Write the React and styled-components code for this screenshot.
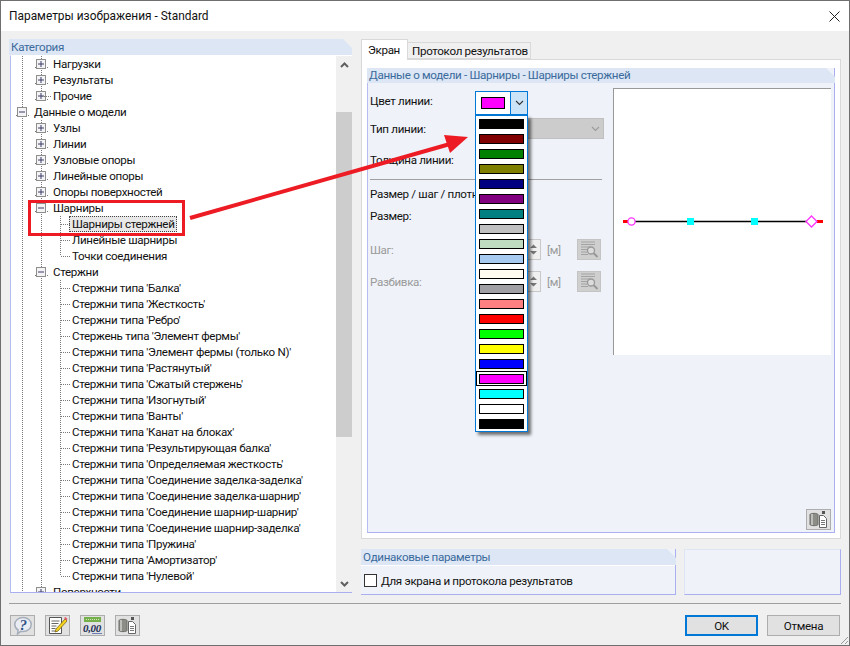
import React from "react";
import styled, { createGlobalStyle, css } from "styled-components";

const
	GlobalStyle = createGlobalStyle`
		html, body {
			margin: 0;
			width: 850px;
			height: 646px;
			overflow: hidden;
			background: #f0f0f0;
		}
		* { box-sizing: border-box; }
	`,
	Dialog = styled.div`
		position: relative;
		width: 850px;
		height: 646px;
		display: flex;
		flex-direction: column;
		background: #f0f0f0;
		border: 1px solid #6f6f6f;
		color: #111;
		font-family: Roboto, "Liberation Sans", sans-serif;
		font-size: 11.6px;
		letter-spacing: -.32px;
		line-height: 16px;
	`,
	TitleBar = styled.div`
		height: 30px;
		flex: none;
		display: flex;
		align-items: center;
		justify-content: space-between;
		padding: 0 9px 0 8px;
		background: #fff;
		font-size: 11.9px;
		letter-spacing: 0;
	`,
	Main = styled.div`
		display: flex;
		gap: 9px;
		height: 556px;
		margin: 8px 8px 0;
	`,
	LeftPanel = styled.div`
		width: 343px;
		height: 554px;
		display: flex;
		flex-direction: column;
	`,
	GroupHeader = styled.div`
		height: ${p => p.$height || 16}px;
		flex: none;
		padding-left: 2px;
		background: #dce6f4;
		color: #3a6a9c;
		clip-path: polygon(0 0, calc(100% - 9px) 0, 100% 9px, 100% 100%, 0 100%);
		line-height: ${p => p.$height || 16}px;
	`,
	TreeBox = styled.div`
		flex: 1;
		min-height: 0;
		display: flex;
		margin-left: 1px;
		border-left: 1px solid #b4bcf0;
		border-bottom: 1px solid #a9aff0;
		border-top: 1px solid #fff;
		background: #fff;
	`,
	Tree = styled.div`
		flex: 1;
		overflow: hidden;
		padding-left: 2px;
	`,
	Row = styled.div`
		height: 16px;
		display: flex;
		align-items: center;
		white-space: nowrap;
	`,
	guideLine = css`
		background-image: repeating-linear-gradient(to bottom, #7a7a7a 0 1px, transparent 1px 2px);
		background-repeat: no-repeat;
		background-position: 9px 0;
		background-size: 1px ${p => (p.$kind === "elbow" ? "8px" : "100%")};
	`,
	Guide = styled.span`
		position: relative;
		flex: none;
		width: 19px;
		height: 16px;
		display: flex;
		align-items: center;
		justify-content: center;
		${p => p.$kind && p.$kind !== "blank" && guideLine}
		${p => (p.$kind === "tee" || p.$kind === "elbow") && css`
			&::after {
				content: "";
				position: absolute;
				left: 10px;
				top: 8px;
				width: 9px;
				height: 1px;
				background-image: repeating-linear-gradient(to right, #7a7a7a 0 1px, transparent 1px 2px);
			}
		`}
	`,
	Expander = styled.span`
		flex: none;
		display: flex;
		padding: 0 2px 0 1px;
		background: repeating-linear-gradient(to right, #7a7a7a 0 1px, transparent 1px 2px) no-repeat 0 8px / 100% 1px;
	`,
	RowLabel = styled.span`
		padding: 0 2px;
		${p => p.$selected && css`
			height: 16px;
			margin-left: -1px;
			padding: 0 2px 0 3px;
			background: #e8e8e8;
			outline: 1px dotted #444;
			outline-offset: -1px;
		`}
	`,
	ScrollBar = styled.div`
		width: 16px;
		flex: none;
		display: flex;
		flex-direction: column;
		justify-content: space-between;
		background: #f0f0f0;
	`,
	ScrollArrow = styled.div`
		height: 17px;
		flex: none;
		display: flex;
		align-items: center;
		justify-content: center;
	`,
	ScrollTrack = styled.div`
		flex: 1;
		padding-top: 39px;
	`,
	ScrollThumb = styled.div`
		height: 325px;
		background: #cdcdcd;
	`,
	RightColumn = styled.div`
		width: 480px;
		display: flex;
		flex-direction: column;
	`,
	Tabs = styled.div`
		height: 20px;
		flex: none;
		display: flex;
		align-items: flex-end;
		white-space: nowrap;
	`,
	Tab = styled.div`
		height: ${p => (p.$active ? 21 : 17)}px;
		width: ${p => (p.$active ? 47 : 123)}px;
		margin-bottom: ${p => (p.$active ? -1 : 0)}px;
		padding: ${p => (p.$active ? "2px 0 0 6px" : "0 0 0 4px")};
		position: relative;
		background: ${p => (p.$active ? "#fff" : "#f0f0f0")};
		border: 1px solid #d9d9d9;
		border-bottom: ${p => (p.$active ? "none" : "1px solid #d9d9d9")};
		border-left: ${p => (p.$active ? "1px solid #d9d9d9" : "none")};
	`,
	TabPanel = styled.div`
		height: 480px;
		flex: none;
		padding: 8px 5px 5px;
		background: #fff;
		border: 1px solid #d9d9d9;
	`,
	InnerGroup = styled.div`
		height: 465px;
		display: flex;
		flex-direction: column;
		background: #eff3f9;
		border-left: 1px solid #b4bcf0;
		border-right: 1px solid #a9aff0;
		border-bottom: 1px solid #a9aff0;
	`,
	InnerHeader = styled(GroupHeader)`
		margin-left: -1px;
		margin-right: -1px;
	`,
	InnerBody = styled.div`
		flex: 1;
		display: flex;
		flex-direction: column;
		padding: 0 2px 2px 2px;
	`,
	Split = styled.div`
		display: flex;
	`,
	FormColumn = styled.div`
		width: 243px;
		flex: none;
		display: flex;
		flex-direction: column;
	`,
	FormRow = styled.div`
		display: flex;
		align-items: center;
		height: ${p => p.$height}px;
		margin-top: ${p => p.$top}px;
		color: ${p => (p.$disabled ? "#9a9a9a" : "inherit")};
		white-space: nowrap;
		overflow: visible;
	`,
	Label = styled.span`
		width: 105px;
		flex: none;
		margin-bottom: ${p => p.$raise || 0}px;
	`,
	Divider = styled.div`
		width: 232px;
		height: 1px;
		margin-top: 8px;
		background: #a0a0a0;
	`,
	ColorCombo = styled.div`
		position: relative;
		z-index: 2;
		width: 53px;
		height: 24px;
		display: flex;
		background: #fff;
		border: 1px solid #0078d7;
	`,
	ComboValue = styled.div`
		flex: 1;
		display: flex;
		align-items: center;
		padding-left: 5px;
	`,
	ComboArrow = styled.div`
		width: 17px;
		flex: none;
		display: flex;
		align-items: center;
		justify-content: center;
		background: #cce4f7;
		border-left: 1px solid #0078d7;
	`,
	Swatch = styled.div`
		width: ${p => p.$width}px;
		height: ${p => p.$tall}px;
		background: ${p => p.$color};
		border: 1px solid #000;
	`,
	ColorList = styled.div`
		position: absolute;
		left: -1px;
		top: 23px;
		width: 53px;
		height: 317px;
		display: flex;
		flex-direction: column;
		background: #fff;
		border: 1px solid #0078d7;
		box-shadow: 3px 3px 3px rgba(0, 0, 0, .55);
	`,
	ColorItem = styled.div`
		height: 15px;
		flex: none;
		display: flex;
		align-items: center;
		justify-content: center;
		border: 1px solid ${p => (p.$selected ? "#000" : "transparent")};
	`,
	DisabledCombo = styled.div`
		width: 129px;
		height: 21px;
		display: flex;
		align-items: center;
		justify-content: flex-end;
		padding-right: 3px;
		background: #ccc;
		border: 1px solid #bfbfbf;
	`,
	SpinBox = styled.div`
		width: 66px;
		height: 21px;
		flex: none;
		display: flex;
		justify-content: flex-end;
		background: #f0f0f0;
		border: 1px solid #c8c8c8;
	`,
	SpinArrows = styled.div`
		width: 13px;
		display: flex;
		align-items: center;
		justify-content: center;
		background: #f0f0f0;
	`,
	Unit = styled.span`
		width: 36px;
		flex: none;
		padding-left: 6px;
	`,
	IconButton = styled.div`
		width: ${p => p.$width || 25}px;
		height: 21px;
		flex: none;
		display: flex;
		align-items: center;
		justify-content: center;
		background: ${p => (p.$disabled ? "#cfcfcf" : "#e1e1e1")};
		border: 1px solid ${p => (p.$disabled ? "#c4c4c4" : "#adadad")};
	`,
	Preview = styled.div`
		width: 218px;
		height: 267px;
		flex: none;
		margin-top: 5px;
		display: flex;
		background: #fff;
		border-top: 1px solid #999;
		border-left: 1px solid #999;
	`,
	PanelFooter = styled.div`
		margin-top: auto;
		display: flex;
		justify-content: flex-end;
		padding-right: 1px;
	`,
	BottomGroups = styled.div`
		display: flex;
		gap: 8px;
		margin-top: 10px;
		height: 46px;
	`,
	SameGroup = styled.div`
		width: 315px;
		display: flex;
		flex-direction: column;
		background: #eff3f9;
		border-right: 1px solid #a9aff0;
		border-bottom: 1px solid #a9aff0;
	`,
	SameHeader = styled(GroupHeader)`
		margin-right: -1px;
	`,
	SameBody = styled.div`
		flex: 1;
		display: flex;
		align-items: center;
		gap: 4px;
		padding: 1px 0 0 3px;
		border-top: 1px solid #fff;
	`,
	Checkbox = styled.div`
		width: 13px;
		height: 13px;
		flex: none;
		background: #fff;
		border: 1px solid #333;
	`,
	EmptyGroup = styled.div`
		flex: 1;
		background: #eff3f9;
		border-top: 1px solid #dce6f4;
		border-left: 1px solid #dce6f4;
		border-right: 1px solid #a9aff0;
		border-bottom: 1px solid #a9aff0;
	`,
	Separator = styled.div`
		height: 1px;
		flex: none;
		margin: 8px 8px 0;
		background: #a0a0a0;
	`,
	Footer = styled.div`
		display: flex;
		justify-content: space-between;
		margin: 11px 9px 0 9px;
	`,
	ButtonGroup = styled.div`
		display: flex;
		gap: ${p => p.$gap}px;
	`,
	DialogButton = styled.div`
		width: 73px;
		height: 21px;
		display: flex;
		align-items: center;
		justify-content: center;
		background: #e1e1e1;
		border: ${p => (p.$primary ? "2px solid #0078d7" : "1px solid #adadad")};
	`,
	Overlay = styled.svg`
		position: absolute;
		left: -1px;
		top: -1px;
		z-index: 5;
		pointer-events: none;
	`,
	Grip = styled.svg`
		position: absolute;
		right: 0;
		bottom: 0;
	`;

const treeRows = [
	{ text: "Нагрузки", level: 1, box: "plus" },
	{ text: "Результаты", level: 1, box: "plus" },
	{ text: "Прочие", level: 1, box: "plus", noStem: true },
	{ text: "Данные о модели", level: 0, box: "minus" },
	{ text: "Узлы", level: 1, box: "plus" },
	{ text: "Линии", level: 1, box: "plus" },
	{ text: "Узловые опоры", level: 1, box: "plus" },
	{ text: "Линейные опоры", level: 1, box: "plus" },
	{ text: "Опоры поверхностей", level: 1, box: "plus" },
	{ text: "Шарниры", level: 1, box: "minus" },
	{ text: "Шарниры стержней", level: 2, selected: true },
	{ text: "Линейные шарниры", level: 2 },
	{ text: "Точки соединения", level: 2, last: true },
	{ text: "Стержни", level: 1, box: "minus" },
	{ text: "Стержни типа 'Балка'", level: 2 },
	{ text: "Стержни типа 'Жесткость'", level: 2 },
	{ text: "Стержни типа 'Ребро'", level: 2 },
	{ text: "Стержень типа 'Элемент фермы'", level: 2 },
	{ text: "Стержни типа 'Элемент фермы (только N)'", level: 2 },
	{ text: "Стержни типа 'Растянутый'", level: 2 },
	{ text: "Стержни типа 'Сжатый стержень'", level: 2 },
	{ text: "Стержни типа 'Изогнутый'", level: 2 },
	{ text: "Стержни типа 'Ванты'", level: 2 },
	{ text: "Стержни типа 'Канат на блоках'", level: 2 },
	{ text: "Стержни типа 'Результирующая балка'", level: 2 },
	{ text: "Стержни типа 'Определяемая жесткость'", level: 2 },
	{ text: "Стержни типа 'Соединение заделка-заделка'", level: 2 },
	{ text: "Стержни типа 'Соединение заделка-шарнир'", level: 2 },
	{ text: "Стержни типа 'Соединение шарнир-шарнир'", level: 2 },
	{ text: "Стержни типа 'Соединение шарнир-заделка'", level: 2 },
	{ text: "Стержни типа 'Пружина'", level: 2 },
	{ text: "Стержни типа 'Амортизатор'", level: 2 },
	{ text: "Стержни типа 'Нулевой'", level: 2, last: true },
	{ text: "Поверхности", level: 1, box: "plus" },
];

const lineColors = [
	"#000000", "#800000", "#008000", "#808000", "#000080", "#800080", "#008080",
	"#c0c0c0", "#c0dcc0", "#a6caf0", "#fffbf0", "#a0a0a4", "#ff8080", "#ff0000",
	"#00ff00", "#ffff00", "#0000ff", "#ff00ff", "#00ffff", "#ffffff", "#000000",
];

function BoxIcon({ kind }) {
	return (
		<svg width="10" height="10" viewBox="0 0 10 10">
			<rect x=".5" y=".5" width="9" height="9" fill="#f4f4f4" stroke="#8e8e8e" />
			<path d="M2 5h6" stroke="#3a3a6a" />
			{kind === "plus" && <path d="M5 2v6" stroke="#3a3a6a" />}
		</svg>
	);
}

function Chevron({ color = "#555", up, width = 9 }) {
	return (
		<svg width={width} height="6" viewBox="0 0 9 6">
			<path d={up ? "M1 5l3.500-3.500L8 5" : "M1 1l3.500 3.500L8 1"} fill="none" stroke={color} strokeWidth="1.100" />
		</svg>
	);
}

function ScrollChevron({ up }) {
	return (
		<svg width="9" height="6" viewBox="0 0 9 6">
			<path d={up ? "M1 5l3.500-3.500L8 5" : "M1 1l3.500 3.500L8 1"} fill="none" stroke="#606060" strokeWidth="2" />
		</svg>
	);
}

function HelpIcon() {
	return (
		<svg width="20" height="19" viewBox="0 0 20 19">
			<path d="M10 1.500c4.600 0 8.200 3 8.200 7s-3.600 7-8.200 7c-.8 0-1.500-.1-2.200-.3L4.500 18l.6-4C3 12.700 1.800 10.800 1.800 8.500c0-4 3.600-7 8.200-7z" fill="#e9edf3" stroke="#a6aebb" strokeWidth="1.500" />
			<text x="10" y="13.500" textAnchor="middle" fontFamily="Liberation Serif, serif" fontWeight="700" fontStyle="italic" fontSize="15" fill="#2f4f86">?</text>
		</svg>
	);
}

function NotesIcon() {
	return (
		<svg width="20" height="19" viewBox="0 0 20 19">
			<path d="M1.500 1.500h12v16h-12z" fill="#fff" stroke="#555" />
			<path d="M3.500 5h8M3.500 7.500h7M3.500 10h5M3.500 12.500h4M3.500 15h6" stroke="#666" />
			<path d="M8 13l9-10 2 2-9 10-3 1z" fill="#f6d21e" stroke="#6a5a10" strokeWidth=".7" />
			<path d="M16 2l1.500-1 2 2-1 1.500z" fill="#e2566a" />
		</svg>
	);
}

function UnitsIcon() {
	return (
		<svg width="20" height="18" viewBox="0 0 20 18">
			<rect x="1" y="0" width="17" height="5" fill="#76b04a" />
			<path d="M3 2.500h13" stroke="#d5e8c4" strokeDasharray="1 1" />
			<text x="0" y="15" fontFamily="Liberation Serif, serif" fontStyle="italic" fontWeight="700" fontSize="11" fill="#1d2f55">0,00</text>
			<path d="M9 16.500h10" stroke="#6b7fb5" />
		</svg>
	);
}

function CopyIcon() {
	return (
		<svg width="19" height="18" viewBox="0 0 19 18">
			<path d="M1 3.500c0-1.500 8-1.500 8 0v10c0 1.500-8 1.500-8 0z" fill="#8d8d88" stroke="#6a6a66" />
			<path d="M3 3v11" stroke="#cfcfcb" strokeWidth="1.500" />
			<path d="M10.500 4.500h4l3 3v9h-7z" fill="#fff" stroke="#666" />
			<path d="M12 9.500h4M12 11.500h4M12 13.500h4" stroke="#777" />
			<rect x="13" y="0" width="3" height="3" fill="#555" />
		</svg>
	);
}

function SearchListIcon() {
	return (
		<svg width="22" height="19" viewBox="0 0 22 19">
			<path d="M3 2h14M3 4.500h14M3 7h9M3 9.500h7M3 12h7M3 14.500h7" stroke="#a3a3a3" />
			<circle cx="13" cy="10.500" r="3.500" fill="#dcdcdc" stroke="#989898" strokeWidth="1.300" />
			<path d="M15.500 13l4 4" stroke="#989898" strokeWidth="2" />
		</svg>
	);
}

function SpinControl() {
	return (
		<SpinBox>
			<SpinArrows>
				<svg width="9" height="13" viewBox="0 0 9 13">
					<path d="M4.500 1.500L8 5H1zM1 8h7l-3.500 3.500z" fill="#777" />
				</svg>
			</SpinArrows>
		</SpinBox>
	);
}

function TreeRow({ row }) {
	const stem = row.level === 2 ? (row.last ? "elbow" : "tee") : null;
	return (
		<Row>
			{row.level > 0 && <Guide $kind="line" />}
			{row.level === 2 && <Guide $kind="line" />}
			{row.level === 2 && <Guide $kind={stem} />}
			{row.box && (
				<Guide $kind={row.noStem ? "elbow" : "line"}>
					<Expander><BoxIcon kind={row.box} /></Expander>
				</Guide>
			)}
			<RowLabel $selected={row.selected}>{row.text}</RowLabel>
		</Row>
	);
}

function LinePreview() {
	return (
		<svg width="217" height="266" viewBox="0 0 217 266">
			<path d="M9 132.500h6M203 132.500h6" stroke="#f00" strokeWidth="3" />
			<path d="M15 132.500h188" stroke="#000" strokeWidth="1.500" />
			<circle cx="17.500" cy="132.500" r="3.600" fill="#fff" stroke="#ff33ff" strokeWidth="1.300" />
			<rect x="73" y="129" width="7" height="7" fill="#00ffff" />
			<rect x="137" y="129" width="7" height="7" fill="#00ffff" />
			<path d="M197.500 127l5.500 5.500-5.500 5.500-5.500-5.500z" fill="#fff" stroke="#ff33ff" strokeWidth="1.300" />
		</svg>
	);
}

export default function App() {
	return (
		<Dialog>
			<GlobalStyle />
			<TitleBar>
				<span>Параметры изображения - Standard</span>
				<svg width="11" height="11" viewBox="0 0 11 11">
					<path d="M.5.5l10 10M10.500.5l-10 10" stroke="#222" />
				</svg>
			</TitleBar>
			<Main>
				<LeftPanel>
					<GroupHeader>Категория</GroupHeader>
					<TreeBox>
						<Tree>
							{treeRows.map(row => <TreeRow key={row.text} row={row} />)}
						</Tree>
						<ScrollBar>
							<ScrollArrow><ScrollChevron up /></ScrollArrow>
							<ScrollTrack><ScrollThumb /></ScrollTrack>
							<ScrollArrow><ScrollChevron /></ScrollArrow>
						</ScrollBar>
					</TreeBox>
				</LeftPanel>
				<RightColumn>
					<Tabs>
						<Tab $active>Экран</Tab>
						<Tab>Протокол результатов</Tab>
					</Tabs>
					<TabPanel>
						<InnerGroup>
							<InnerHeader $height={15}>Данные о модели - Шарниры - Шарниры стержней</InnerHeader>
							<InnerBody>
								<Split>
									<FormColumn>
										<FormRow $height={24} $top={8}>
											<Label $raise={4}>Цвет линии:</Label>
											<ColorCombo>
												<ComboValue><Swatch $color="#ff00ff" $width={24} $tall={12} /></ComboValue>
												<ComboArrow><Chevron color="#333" /></ComboArrow>
												<ColorList>
													{lineColors.map((color, i) => (
														<ColorItem key={i} $selected={i === 17}>
															<Swatch $color={color} $width={45} $tall={10} />
														</ColorItem>
													))}
												</ColorList>
											</ColorCombo>
										</FormRow>
										<FormRow $height={21} $top={3}>
											<Label>Тип линии:</Label>
											<DisabledCombo><Chevron color="#9c9c9c" /></DisabledCombo>
										</FormRow>
										<FormRow $height={22} $top={10}>
											<Label>Толщина линии:</Label>
										</FormRow>
										<Divider />
										<FormRow $height={16} $top={6}>Размер / шаг / плотность</FormRow>
										<FormRow $height={16} $top={6}>
											<Label>Размер:</Label>
										</FormRow>
										<FormRow $height={21} $top={15} $disabled>
											<Label>Шаг:</Label>
											<SpinControl />
											<Unit>[м]</Unit>
											<IconButton $disabled $width={24}><SearchListIcon /></IconButton>
										</FormRow>
										<FormRow $height={21} $top={11} $disabled>
											<Label>Разбивка:</Label>
											<SpinControl />
											<Unit>[м]</Unit>
											<IconButton $disabled $width={24}><SearchListIcon /></IconButton>
										</FormRow>
									</FormColumn>
									<Preview><LinePreview /></Preview>
								</Split>
								<PanelFooter>
									<IconButton><CopyIcon /></IconButton>
								</PanelFooter>
							</InnerBody>
						</InnerGroup>
					</TabPanel>
					<BottomGroups>
						<SameGroup>
							<SameHeader>Одинаковые параметры</SameHeader>
							<SameBody>
								<Checkbox />
								<span>Для экрана и протокола результатов</span>
							</SameBody>
						</SameGroup>
						<EmptyGroup />
					</BottomGroups>
				</RightColumn>
			</Main>
			<Separator />
			<Footer>
				<ButtonGroup $gap={10}>
					<IconButton><HelpIcon /></IconButton>
					<IconButton><NotesIcon /></IconButton>
					<IconButton><UnitsIcon /></IconButton>
					<IconButton><CopyIcon /></IconButton>
				</ButtonGroup>
				<ButtonGroup $gap={9}>
					<DialogButton $primary>OK</DialogButton>
					<DialogButton>Отмена</DialogButton>
				</ButtonGroup>
			</Footer>
			<Grip width="11" height="11" viewBox="0 0 11 11">
				<path d="M10 3l-7 7M10 7l-3 3" stroke="#9a9a9a" />
			</Grip>
			<Overlay width="850" height="646" viewBox="0 0 850 646">
				<rect x="29.500" y="201.500" width="154" height="33" fill="none" stroke="#ed1c24" strokeWidth="3" />
				<path d="M190 218L450 144" stroke="#ed1c24" strokeWidth="4" />
				<path d="M444 135L468 137L450 153z" fill="#ed1c24" />
			</Overlay>
		</Dialog>
	);
}
